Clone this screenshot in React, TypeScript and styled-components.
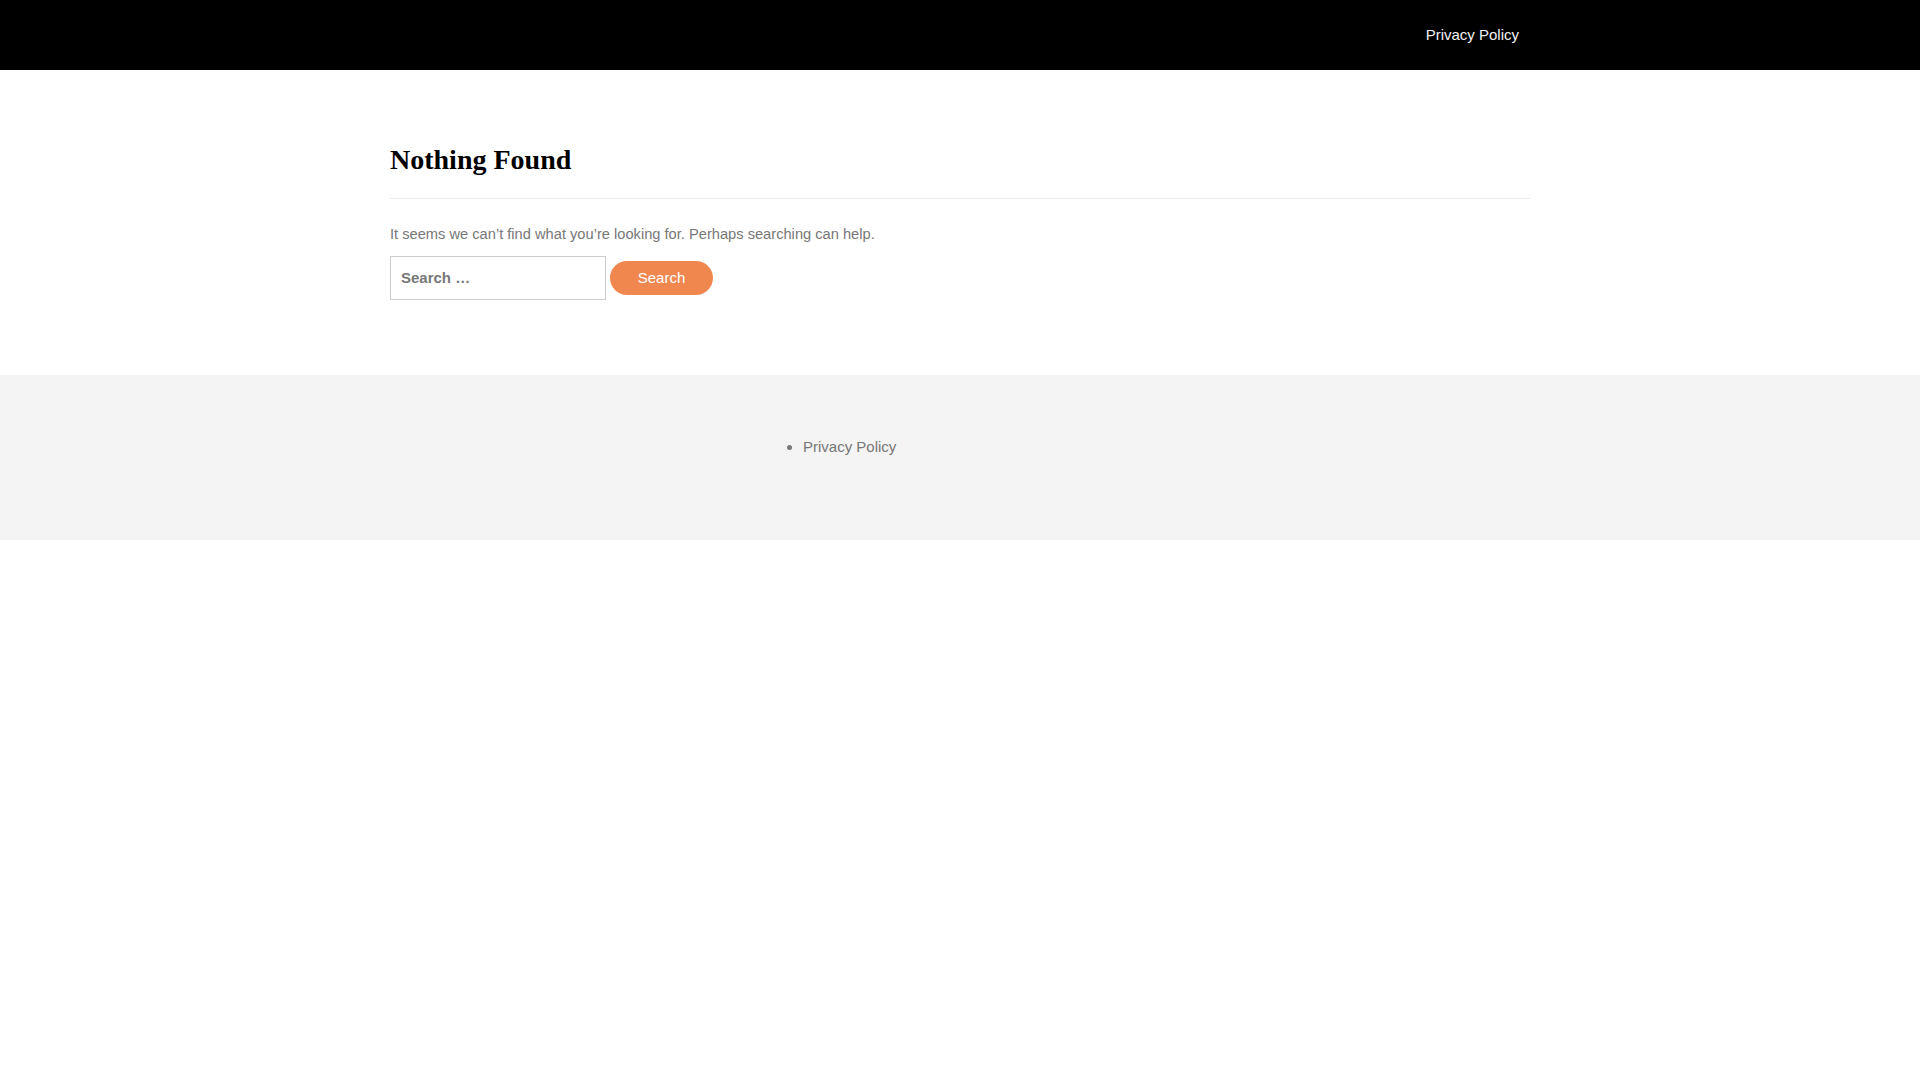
import { createGlobalStyle, styled } from "styled-components";

const GlobalStyle = createGlobalStyle`
  html, body {
    margin: 0;
    padding: 0;
    background: #fff;
    font-family: "Liberation Sans", Arial, sans-serif;
  }
`;

export default function App() {
  return (
    <>
      <GlobalStyle />
      <Header>
        <Container>
          <Nav>
            <NavLink href="#">Privacy Policy</NavLink>
          </Nav>
        </Container>
      </Header>
      <Main>
        <Container>
          <PageHeader>
            <Title>Nothing Found</Title>
          </PageHeader>
          <Text>It seems we can’t find what you’re looking for. Perhaps searching can help.</Text>
          <SearchForm onSubmit={(e) => e.preventDefault()}>
            <SearchInput type="search" placeholder="Search …" />
            <SearchButton type="submit">Search</SearchButton>
          </SearchForm>
        </Container>
      </Main>
      <Footer>
        <Container>
          <FooterMenu>
            <FooterItem>
              <FooterLink href="#">Privacy Policy</FooterLink>
            </FooterItem>
          </FooterMenu>
        </Container>
      </Footer>
    </>
  );
}

const Container = styled.div`
  width: 1140px;
  margin: 0 auto;
`;

const Header = styled.header`
  height: 70px;
  background: #000;
  display: flex;
  align-items: center;
`;

const Nav = styled.nav`
  display: flex;
  justify-content: flex-end;
  padding-right: 11px;
`;

const NavLink = styled.a`
  color: #f2f2f2;
  font-size: 15px;
  line-height: 24px;
  text-decoration: none;
`;

const Main = styled.main`
  padding: 73px 0 75px;
`;

const PageHeader = styled.div`
  padding-bottom: 21px;
  border-bottom: 1px solid #ebebeb;
`;

const Title = styled.h1`
  margin: 0;
  font-family: "Liberation Serif", "Times New Roman", serif;
  font-size: 28px;
  line-height: 1.2;
  font-weight: 700;
  color: #000;
`;

const Text = styled.p`
  margin: 23px 0 10px;
  font-size: 14.67px;
  line-height: 24px;
  color: #777;
`;

const SearchForm = styled.form`
  display: flex;
  align-items: center;
  gap: 4px;
`;

const SearchInput = styled.input`
  box-sizing: border-box;
  width: 216px;
  height: 44px;
  padding: 0 10px;
  border: 1px solid #ccc;
  border-radius: 0;
  outline: none;
  font-family: inherit;
  font-size: 15px;
  color: #555;

  &::placeholder {
    color: #777;
    font-weight: 700;
  }
`;

const SearchButton = styled.button`
  box-sizing: border-box;
  width: 103px;
  height: 34px;
  border: none;
  border-radius: 17px;
  background: #f0874f;
  color: #fff;
  font-family: inherit;
  font-size: 15px;
  cursor: pointer;
`;

const Footer = styled.footer`
  background: #f4f4f4;
  padding: 60px 0 81px;
`;

const FooterMenu = styled.ul`
  margin: 0;
  padding: 0 0 0 413px;
  list-style: disc;
  color: #777;
`;

const FooterItem = styled.li`
  font-size: 15px;
  line-height: 24px;
`;

const FooterLink = styled.a`
  color: #777;
  text-decoration: none;
`;
